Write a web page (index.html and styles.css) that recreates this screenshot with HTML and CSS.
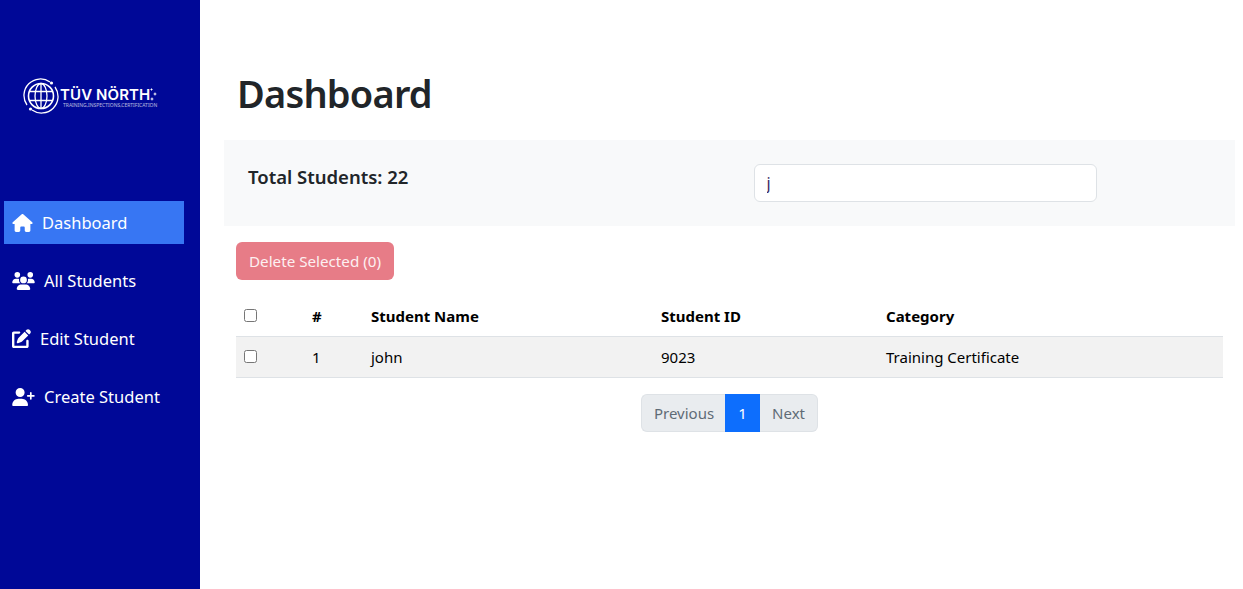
FILE: index.html
```html
<!DOCTYPE html>
<html lang="en">
<head>
  <meta charset="UTF-8" />
  <meta name="viewport" content="width=device-width, initial-scale=1.0"/>
  <title>Dashboard</title>
  <link rel="stylesheet" href="styles.css">
</head>
<body>
  <div class="layout">
    <aside class="sidebar">
      <div class="logo">
        <svg class="logo-globe" viewBox="0 0 36 36" fill="none" stroke="#fff">
          <path d="M4 27A16.5 16.5 0 0 1 27 4" stroke-width="1.3"/>
          <path d="M32 9A16.5 16.5 0 0 1 9 32" stroke-width="1.3"/>
          <circle cx="28.5" cy="5" r="1.6" fill="#fff" stroke="none"/>
          <circle cx="7.5" cy="31" r="1.6" fill="#fff" stroke="none"/>
          <circle cx="18" cy="18" r="12.5" stroke-width="1.6"/>
          <ellipse cx="18" cy="18" rx="6" ry="12.5" stroke-width="1.3"/>
          <path d="M18 5.5v25M6.5 13.5h23M6.5 22.5h23" stroke-width="1.3"/>
        </svg>
        <div class="logo-text">
          <div class="logo-name">
            TÜV NÖRTH
            <svg class="logo-stars" viewBox="0 0 7 14" fill="#fff">
              <path d="M1.5 0l.5 1 1 .5-1 .5-.5 1-.5-1-1-.5 1-.5z"/>
              <path d="M5 4l.6 1.4 1.4.6-1.4.6L5 8l-.6-1.4L3 6l1.4-.6z"/>
              <path d="M2 9l.6 1.4 1.4.6-1.4.6L2 13l-.6-1.4L0 11l1.4-.6z"/>
            </svg>
          </div>
          <div class="logo-tag">TRAINING,INSPECTIONS,CERTIFICATION</div>
        </div>
      </div>
      <nav class="menu">
        <a class="menu-item active" href="#">
          <svg class="icon icon-home" viewBox="0 0 576 512"><path d="M575.8 255.5c0 18-15 32.1-32 32.1h-32l.7 160.2c0 2.7-.2 5.4-.5 8.1V472c0 22.1-17.9 40-40 40H456c-1.1 0-2.2 0-3.3-.1c-1.4 .1-2.8 .1-4.2 .1H416 392c-22.1 0-40-17.9-40-40V448 384c0-17.7-14.3-32-32-32H256c-17.7 0-32 14.3-32 32v64 24c0 22.1-17.9 40-40 40H160 128.1c-1.5 0-3-.1-4.5-.2c-1.2 .1-2.4 .2-3.6 .2H104c-22.1 0-40-17.9-40-40V360c0-.9 0-1.9 .1-2.8V287.6H32c-18 0-32-14-32-32.1c0-9 3-17 10-24L266.4 8c7-7 15-8 22-8s15 2 21 7L564.8 231.5c8 7 12 15 11 24z"/></svg>
          Dashboard
        </a>
        <a class="menu-item" href="#">
          <svg class="icon icon-wide" viewBox="0 0 640 512"><path d="M144 0a80 80 0 1 1 0 160A80 80 0 1 1 144 0zM512 0a80 80 0 1 1 0 160A80 80 0 1 1 512 0zM0 298.700C0 239.800 47.800 192 106.700 192h42.700c15.900 0 31 3.500 44.600 9.700c-1.300 7.200-1.900 14.700-1.900 22.300c0 38.200 16.800 72.500 43.300 96c-.2 0-.4 0-.7 0H21.300C9.600 320 0 310.400 0 298.700zM405.300 320c-.2 0-.4 0-.7 0c26.600-23.500 43.300-57.800 43.300-96c0-7.600-.7-15-1.900-22.300c13.600-6.300 28.700-9.700 44.600-9.700h42.700C592.200 192 640 239.800 640 298.700c0 11.800-9.600 21.300-21.300 21.300H405.300zM224 224a96 96 0 1 1 192 0 96 96 0 1 1 -192 0zM128 485.300C128 411.700 187.700 352 261.300 352H378.700C452.300 352 512 411.700 512 485.300c0 14.700-11.900 26.700-26.700 26.700H154.700c-14.700 0-26.700-11.900-26.700-26.700z"/></svg>
          All Students
        </a>
        <a class="menu-item" href="#">
          <svg class="icon icon-edit" viewBox="0 0 512 512"><path d="M471.600 21.700c-21.900-21.900-57.300-21.900-79.200 0L362.300 51.700l97.900 97.900 30.100-30.100c21.900-21.900 21.900-57.300 0-79.200L471.600 21.700zm-299.200 220c-6.100 6.100-10.800 13.600-13.500 21.900l-29.600 88.800c-2.900 8.600-.6 18.100 5.800 24.600s15.900 8.700 24.600 5.800l88.800-29.600c8.200-2.700 15.700-7.400 21.900-13.500L437.700 172.300 339.700 74.300 172.400 241.700zM48 64C21.500 64 0 85.500 0 112V464c0 26.500 21.500 48 48 48H400c26.500 0 48-21.500 48-48V320c0-17.700-14.300-32-32-32s-32 14.300-32 32V448H64V128H192c17.700 0 32-14.300 32-32s-14.300-32-32-32H48z"/></svg>
          Edit Student
        </a>
        <a class="menu-item" href="#">
          <svg class="icon icon-wide" viewBox="0 0 640 512"><path d="M96 128a128 128 0 1 1 256 0A128 128 0 1 1 96 128zM0 482.300C0 383.800 79.800 304 178.300 304h91.400C368.200 304 448 383.800 448 482.300c0 16.400-13.300 29.700-29.700 29.700H29.700C13.300 512 0 498.700 0 482.300zM504 312V248H440c-13.300 0-24-10.700-24-24s10.700-24 24-24h64V136c0-13.300 10.700-24 24-24s24 10.700 24 24v64h64c13.300 0 24 10.700 24 24s-10.700 24-24 24H552v64c0 13.300-10.700 24-24 24s-24-10.700-24-24z"/></svg>
          Create Student
        </a>
      </nav>
    </aside>

    <main class="content">
      <h1 class="title">Dashboard</h1>
      <div class="stats-bar">
        <div class="stats-col"><h2 class="total">Total Students: 22</h2></div>
        <div class="stats-col"><input class="search" type="text" value="j"></div>
      </div>
      <div class="list">
        <button class="delete-btn" disabled>Delete Selected (0)</button>
        <table class="students">
          <colgroup>
            <col class="col-check"><col class="col-num"><col class="col-name"><col class="col-id"><col>
          </colgroup>
          <thead>
            <tr>
              <th><input type="checkbox"></th>
              <th>#</th>
              <th>Student Name</th>
              <th>Student ID</th>
              <th>Category</th>
            </tr>
          </thead>
          <tbody>
            <tr>
              <td><input type="checkbox"></td>
              <td>1</td>
              <td>john</td>
              <td>9023</td>
              <td>Training Certificate</td>
            </tr>
          </tbody>
        </table>
        <div class="pagination">
          <span class="page-link first">Previous</span>
          <span class="page-link current">1</span>
          <span class="page-link last">Next</span>
        </div>
      </div>
    </main>
  </div>
</body>
</html>
```

FILE: styles.css
```css
* {
  box-sizing: border-box;
}
body {
  margin: 0;
  font-family: "Noto Sans", "Open Sans", sans-serif;
  font-size: 16px;
  color: #212529;
  background: #fff;
}
.layout {
  display: flex;
  height: 589px;
  overflow: hidden;
}
.sidebar {
  width: 200px;
  flex: none;
  background: #000897;
  padding: 78px 16px 0 4px;
}
.logo {
  display: flex;
  align-items: center;
  padding-left: 19px;
  height: 36px;
  color: #fff;
}
.logo-globe {
  width: 36px;
  height: 36px;
  flex: none;
}
.logo-text {
  margin-left: 1px;
  padding-top: 3px;
  white-space: nowrap;
}
.logo-name {
  display: flex;
  align-items: center;
  font-family: "Inter", sans-serif;
  font-size: 15px;
  font-weight: 600;
  line-height: 15px;
  letter-spacing: 0.1px;
}
.logo-stars {
  width: 7px;
  height: 14px;
}
.logo-tag {
  margin-left: 3px;
  font-size: 5px;
  line-height: 6px;
  opacity: 0.7;
}
.menu {
  margin-top: 87px;
  display: flex;
  flex-direction: column;
  gap: 15px;
}
.menu-item {
  display: flex;
  align-items: center;
  height: 43px;
  padding-left: 8px;
  color: #fff;
  text-decoration: none;
  font-size: 16.5px;
  white-space: nowrap;
}
.menu-item.active {
  background: #3776f3;
}
.icon {
  fill: #fff;
  height: 18px;
  flex: none;
  margin-right: 9px;
}
.icon-home {
  width: 21px;
}
.icon-wide {
  width: 23px;
}
.icon-edit {
  width: 19px;
  height: 19px;
}
.content {
  flex: 1;
  min-width: 0;
  padding: 67px 8px 0 24px;
}
.title {
  margin: 0 0 0 13px;
  font-size: 38px;
  font-weight: 600;
  line-height: 52px;
  letter-spacing: -0.8px;
}
.stats-bar {
  display: flex;
  margin-top: 21px;
  height: 86px;
  background: #f8f9fa;
  padding: 24px;
}
.stats-col {
  flex: 1;
}
.total {
  margin: 0;
  font-size: 18.5px;
  font-weight: 600;
  line-height: 26px;
}
.search {
  display: block;
  width: 343px;
  height: 38px;
  margin-left: 24px;
  padding: 6px 12px;
  border: 1px solid #dee2e6;
  border-radius: 6px;
  font: inherit;
  color: #3b2a63;
  background: #fff;
}
.list {
  padding: 16px 12px 0;
}
.delete-btn {
  display: block;
  width: 158px;
  height: 38px;
  padding: 0;
  border: none;
  border-radius: 6px;
  background: #e77c87;
  color: #fdf0f1;
  font: inherit;
  font-size: 15.2px;
}
.students {
  width: 100%;
  margin-top: 16px;
  border-collapse: collapse;
  table-layout: fixed;
  color: #000;
  font-size: 15px;
}
.col-check {
  width: 68px;
}
.col-num {
  width: 59px;
}
.col-name {
  width: 290px;
}
.col-id {
  width: 225px;
}
.students th,
.students td {
  height: 41px;
  padding: 8px;
  text-align: left;
  vertical-align: middle;
  border-bottom: 1px solid #dee2e6;
}
.students th {
  height: 40px;
  font-weight: 700;
}
.students tbody tr {
  background: #f2f2f2;
}
.students input {
  display: block;
  width: 13px;
  height: 13px;
  margin: 0;
}
.pagination {
  display: flex;
  justify-content: center;
  margin-top: 16px;
}
.page-link {
  height: 38px;
  line-height: 36px;
  padding: 0 12px;
  font-size: 15px;
  background: #e9ecef;
  color: #5f6b76;
  border: 1px solid #dee2e6;
}
.page-link.first {
  border-radius: 6px 0 0 6px;
  border-right: none;
  padding-right: 11px;
}
.page-link.last {
  border-radius: 0 6px 6px 0;
  border-left: none;
}
.page-link.current {
  background: #0d6efd;
  border-color: #0d6efd;
  color: #fff;
  width: 35px;
  padding: 0;
  text-align: center;
}
```
